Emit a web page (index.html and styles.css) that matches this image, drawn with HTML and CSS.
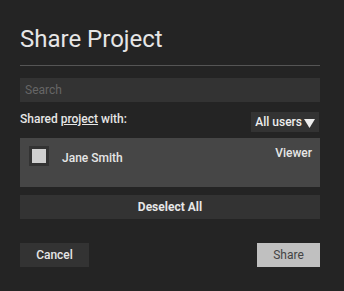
FILE: index.html
```html
<!DOCTYPE html>
<html lang="en">
<head>
    <meta charset="UTF-8">
    <meta name="viewport" content="width=device-width, initial-scale=1.0">
    <title>Share Project</title>
    <link rel="stylesheet" href="styles.css">
</head>
<body>
    <div class="dialog">
        <h1>Share Project</h1>
        <input class="search" type="text" placeholder="Search">

        <div class="shared-head">
            <span>Shared <u>project</u> with:</span>
            <button class="filter">All users
                <svg class="arrow" width="11" height="9" viewBox="0 0 11 9"><path d="M0 0h11L5.5 9z" fill="#eee"/></svg>
            </button>
        </div>

        <div class="user-list">
            <div class="user-row">
                <span class="check"></span>
                <span class="name">Jane Smith</span>
                <span class="role">Viewer</span>
            </div>
        </div>

        <button class="deselect">Deselect All</button>

        <div class="actions">
            <button class="btn">Cancel</button>
            <button class="btn btn-share">Share</button>
        </div>
    </div>
</body>
</html>
```

FILE: styles.css
```css
html, body {
    margin: 0;
    height: 100%;
}
body {
    font-family: Roboto, "Liberation Sans", sans-serif;
    background: #242424;
    color: #e6e6e6;
}
.dialog {
    padding: 25px 24px 0 20px;
    width: 300px;
}
h1 {
    font-size: 24px;
    font-weight: 400;
    margin: 0;
    padding-bottom: 12px;
    border-bottom: 1px solid #555;
    line-height: 28px;
}
.search {
    display: block;
    box-sizing: border-box;
    width: 100%;
    height: 24px;
    margin-top: 12px;
    background: #333;
    border: none;
    outline: none;
    padding: 0 5px;
    font-family: inherit;
    font-size: 12px;
    color: #ddd;
}
.search::placeholder {
    color: #666;
}
.shared-head {
    display: flex;
    justify-content: space-between;
    align-items: flex-start;
    margin-top: 9px;
    font-size: 12px;
    font-weight: 500;
}
.shared-head > span {
    padding-top: 1px;
}
.filter {
    display: flex;
    align-items: center;
    gap: 2px;
    background: #333;
    border: none;
    color: #eee;
    font-family: inherit;
    font-size: 12px;
    font-weight: 500;
    height: 20px;
    padding: 0 4px;
    margin-top: 1px;
    margin-right: 1px;
}
.arrow {
    margin-top: 2px;
}
.user-list {
    margin-top: 6px;
    background: #464646;
    height: 49px;
}
.user-row {
    display: flex;
    align-items: flex-start;
    padding: 8px 8px 0 9px;
    font-size: 12px;
    font-weight: 500;
}
.check {
    width: 14px;
    height: 14px;
    background: #d0d0d0;
    border: 3px solid #333;
}
.name {
    margin-left: 13px;
    margin-top: 5px;
}
.role {
    margin-left: auto;
}
.deselect {
    display: block;
    width: 100%;
    height: 24px;
    margin-top: 8px;
    background: #333;
    border: none;
    color: #e6e6e6;
    font-family: inherit;
    font-size: 12px;
    font-weight: 700;
}
.actions {
    display: flex;
    justify-content: space-between;
    margin-top: 24px;
}
.btn {
    height: 24px;
    width: 69px;
    background: #333;
    border: none;
    color: #e6e6e6;
    font-family: inherit;
    font-size: 12px;
    font-weight: 500;
}
.btn-share {
    width: 63px;
    background: #c0c0c0;
    color: #444;
    font-weight: 400;
}
```
